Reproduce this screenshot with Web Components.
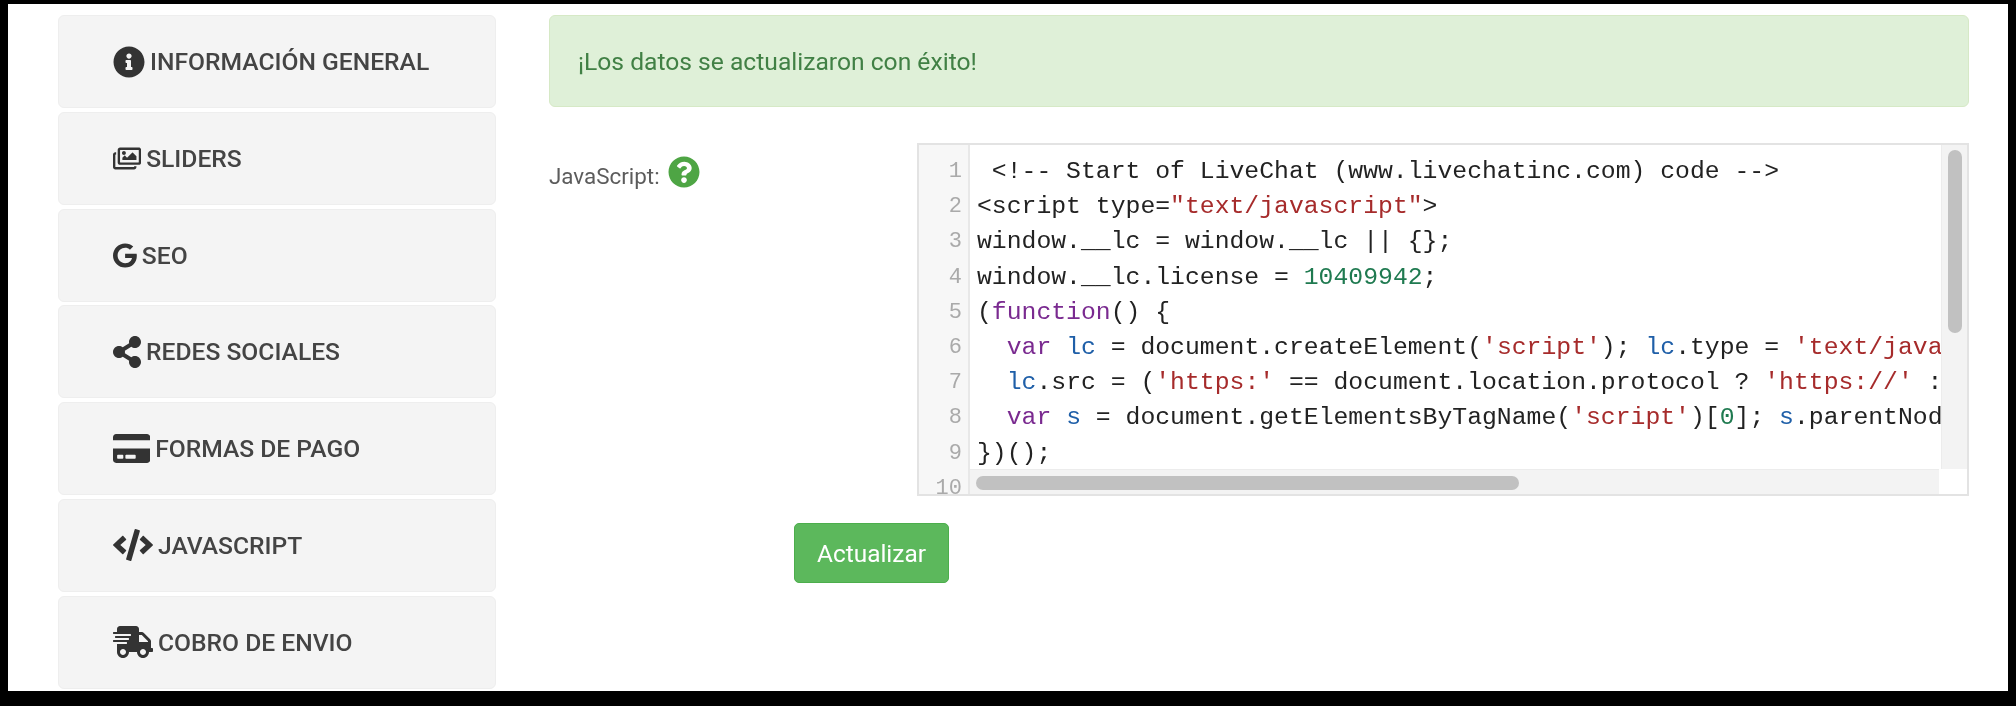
<!doctype html>
<html lang="es">
<head>
<meta charset="utf-8">
<title>JavaScript</title>
<style>
  html, body { margin: 0; height: 100%; background: #000; }
  body { font-family: Roboto, "Liberation Sans", sans-serif; overflow: hidden; }
</style>
</head>
<body>
<settings-page>
  <side-menu slot="menu">
    <menu-item icon="info">INFORMACIÓN GENERAL</menu-item>
    <menu-item icon="images">SLIDERS</menu-item>
    <menu-item icon="google">SEO</menu-item>
    <menu-item icon="share">REDES SOCIALES</menu-item>
    <menu-item icon="card">FORMAS DE PAGO</menu-item>
    <menu-item icon="code">JAVASCRIPT</menu-item>
    <menu-item icon="truck">COBRO DE ENVIO</menu-item>
  </side-menu>
  <success-alert>¡Los datos se actualizaron con éxito!</success-alert>
  <code-field label="JavaScript:"></code-field>
  <submit-button>Actualizar</submit-button>
</settings-page>

<script>
// Icon shapes, [viewBox width, font size, path]
const ICONS = {
  info: [512, 32, 'M256 8C119.043 8 8 119.083 8 256c0 136.997 111.043 248 248 248s248-111.003 248-248C504 119.083 392.957 8 256 8zm0 110c23.196 0 42 18.804 42 42s-18.804 42-42 42-42-18.804-42-42 18.804-42 42-42zm56 254c0 6.627-5.373 12-12 12h-88c-6.627 0-12-5.373-12-12v-24c0-6.627 5.373-12 12-12h12v-64h-12c-6.627 0-12-5.373-12-12v-24c0-6.627 5.373-12 12-12h64c6.627 0 12 5.373 12 12v100h12c6.627 0 12 5.373 12 12v24z'],
  images: [576, 25, 'M480 416v16c0 26.51-21.49 48-48 48H48c-26.51 0-48-21.49-48-48V176c0-26.51 21.49-48 48-48h16v48H54a6 6 0 0 0-6 6v244a6 6 0 0 0 6 6h372a6 6 0 0 0 6-6v-10h48zm42-336H150a6 6 0 0 0-6 6v244a6 6 0 0 0 6 6h372a6 6 0 0 0 6-6V86a6 6 0 0 0-6-6zm6-48c26.51 0 48 21.49 48 48v256c0 26.51-21.49 48-48 48H144c-26.51 0-48-21.49-48-48V80c0-26.51 21.49-48 48-48h384zM264 144c0 22.091-17.909 40-40 40s-40-17.909-40-40 17.909-40 40-40 40 17.909 40 40zm-72 96l39.515-39.515c4.686-4.686 12.284-4.686 16.971 0L288 240l103.515-103.515c4.686-4.686 12.284-4.686 16.971 0L480 208v80H192v-48z'],
  google: [488, 25, 'M488 261.8C488 403.3 391.1 504 248 504 110.8 504 0 393.2 0 256S110.8 8 248 8c66.8 0 123 24.5 166.3 64.9l-67.5 64.9C258.5 52.6 94.3 116.6 94.3 256c0 86.5 69.1 156.6 153.7 156.6 98.2 0 135-70.4 140.8-106.9H248v-85.3h236.1c2.3 12.7 3.9 24.9 3.9 41.4z'],
  share: [448, 32, 'M352 320c-22.608 0-43.387 7.819-59.79 20.895l-102.486-64.054a96.551 96.551 0 0 0 0-41.683l102.486-64.054C308.613 184.181 329.392 192 352 192c53.019 0 96-42.981 96-96S405.019 0 352 0s-96 42.981-96 96c0 7.158.79 14.13 2.276 20.841L155.79 180.895C139.387 167.819 118.608 160 96 160c-53.019 0-96 42.981-96 96s42.981 96 96 96c22.608 0 43.387-7.819 59.79-20.895l102.486 64.054A96.301 96.301 0 0 0 256 416c0 53.019 42.981 96 96 96s96-42.981 96-96-42.981-96-96-96z'],
  card: [576, 33, 'M0 432c0 26.5 21.5 48 48 48h480c26.5 0 48-21.5 48-48V256H0v176zm192-68c0-6.6 5.4-12 12-12h136c6.6 0 12 5.4 12 12v40c0 6.6-5.4 12-12 12H204c-6.6 0-12-5.4-12-12v-40zm-128 0c0-6.6 5.4-12 12-12h72c6.6 0 12 5.4 12 12v40c0 6.6-5.4 12-12 12H76c-6.6 0-12-5.4-12-12v-40zM576 80v48H0V80c0-26.5 21.5-48 48-48h480c26.5 0 48 21.5 48 48z'],
  code: [640, 32, 'M278.9 511.5l-61-17.7c-6.4-1.8-10-8.5-8.2-14.9L346.2 8.7c1.8-6.4 8.5-10 14.9-8.2l61 17.7c6.4 1.8 10 8.5 8.2 14.9L293.8 503.3c-1.9 6.4-8.5 10.1-14.9 8.2zm-114-112.2l43.5-46.4c4.6-4.9 4.3-12.7-.8-17.2L117 256l90.6-79.7c5.1-4.5 5.5-12.3.8-17.2l-43.5-46.4c-4.5-4.8-12.1-5.1-17-.5L3.8 247.2c-5.1 4.7-5.1 12.8 0 17.5l144.1 135.1c4.9 4.6 12.5 4.4 17-.5zm327.2.6l144.1-135.1c5.1-4.7 5.1-12.8 0-17.5L492.1 112.1c-4.8-4.5-12.4-4.3-17 .5L431.6 159c-4.6 4.9-4.3 12.7.8 17.2L523 256l-90.6 79.7c-5.1 4.5-5.5 12.3-.8 17.2l43.5 46.4c4.5 4.9 12.1 5.1 17 .6z'],
  truck: [640, 32, 'M624 352h-16V243.9c0-12.7-5.1-24.9-14.1-33.9L494 110.1c-9-9-21.2-14.1-33.9-14.1H416V48c0-26.5-21.5-48-48-48H112C85.5 0 64 21.5 64 48v48H8c-4.4 0-8 3.6-8 8v16c0 4.4 3.6 8 8 8h272c4.4 0 8 3.6 8 8v16c0 4.4-3.6 8-8 8H40c-4.4 0-8 3.6-8 8v16c0 4.4 3.6 8 8 8h208c4.4 0 8 3.6 8 8v16c0 4.4-3.6 8-8 8H8c-4.4 0-8 3.6-8 8v16c0 4.4 3.6 8 8 8h208c4.4 0 8 3.6 8 8v16c0 4.4-3.6 8-8 8H64v128c0 53 43 96 96 96s96-43 96-96h128c0 53 43 96 96 96s96-43 96-96h48c8.8 0 16-7.2 16-16v-32c0-8.8-7.2-16-16-16zM160 464c-26.5 0-48-21.5-48-48s21.5-48 48-48 48 21.5 48 48-21.5 48-48 48zm320 0c-26.5 0-48-21.5-48-48s21.5-48 48-48 48 21.5 48 48-21.5 48-48 48zm80-208H416V144h44.1l99.9 99.9V256z'],
};
const HELP_PATH = 'M504 256c0 136.997-111.043 248-248 248S8 392.997 8 256C8 119.083 119.043 8 256 8s248 111.083 248 248zM262.655 90c-54.497 0-89.255 22.957-116.549 63.758-3.536 5.286-2.353 12.415 2.715 16.258l34.699 26.31c5.205 3.947 12.621 3.008 16.665-2.122 17.864-22.658 30.113-35.797 57.303-35.797 20.429 0 45.698 13.148 45.698 32.958 0 14.976-12.363 22.667-32.534 33.976C247.128 238.528 216 254.941 216 296v4c0 6.627 5.373 12 12 12h56c6.627 0 12-5.373 12-12v-1.333c0-28.462 83.186-29.647 83.186-106.667 0-58.002-60.165-102-116.531-102zM256 338c-25.365 0-46 20.635-46 46 0 25.364 20.635 46 46 46s46-20.636 46-46c0-25.365-20.635-46-46-46z';

function define(name, html, setup) {
  customElements.define(name, class extends HTMLElement {
    connectedCallback() {
      if (this.shadowRoot) return;
      this.attachShadow({ mode: 'open' }).innerHTML = html;
      if (setup) setup(this, this.shadowRoot);
    }
  });
}

define('settings-page', `
<style>
  :host { display: flex; margin: 4px 8px 0; height: 687px; background: #fff; overflow: hidden; filter: blur(.45px); }
  .menu { flex: 0 0 438px; margin: 11px 53px 0 50px; }
  .main { flex: 0 0 1420px; min-width: 0; margin-top: 11px; }
</style>
<div class="menu"><slot name="menu"></slot></div>
<div class="main"><slot></slot></div>`);

define('side-menu', `
<style>
  :host { display: flex; flex-direction: column; gap: 3.8px; }
</style>
<slot></slot>`);

define('menu-item', `
<style>
  :host {
    display: flex; align-items: center; gap: 5px; box-sizing: border-box;
    height: 93px; padding: 0 0 0 54px;
    background: #f4f4f4; border: 1px solid #eee; border-radius: 6px;
    color: #444; font: 500 24.64px Roboto, sans-serif; white-space: nowrap;
  }
  svg { display: block; fill: #333; flex: none; }
</style>
<svg></svg><span><slot></slot></span>`, (host, root) => {
  const [w, size, d] = ICONS[host.getAttribute('icon')];
  const svg = root.querySelector('svg');
  svg.setAttribute('viewBox', `0 0 ${w} 512`);
  svg.setAttribute('width', size * w / 512);
  svg.setAttribute('height', size);
  svg.innerHTML = `<path d="${d}"/>`;
});

define('success-alert', `
<style>
  :host {
    display: flex; align-items: center; box-sizing: border-box;
    height: 92px; padding: 1px 28px 0;
    background: #dff0d8; border: 1px solid #d6e9c6; border-radius: 6px;
    color: #418045; font: 400 24.64px Roboto, sans-serif;
  }
</style>
<slot></slot>`);

define('code-field', `
<style>
  :host { display: flex; margin-top: 36px; }
  .label {
    flex: 0 0 368px; display: flex; align-items: flex-start; gap: 8px; padding-top: 13px;
    color: #5c5c5c; font: 400 22.4px/31px Roboto, sans-serif;
  }
  .label span { margin-top: 5px; }
  svg { display: block; width: 32px; height: 32px; fill: #4ea544; }
  .editor {
    flex: 1; min-width: 0; position: relative; box-sizing: border-box; height: 353px;
    display: flex; overflow: hidden; border: 2px solid #e3e3e3; background: #fff;
    font: 24.75px/35.2px "Liberation Mono", monospace; color: #222;
  }
  .gutter {
    flex: 0 0 51px; box-sizing: border-box; padding: 9px 6px 0 0; text-align: right;
    background: #f7f7f7; border-right: 2px solid #e8e8e8; color: #aaa; z-index: 1;
    font-size: 22px;
  }
  .code { flex: 1; min-width: 0; overflow: hidden; padding: 9px 0 0 7px; white-space: pre; }
  .s { color: #a62b2b; } .n { color: #1f7a50; } .k { color: #7a2a90; } .d { color: #1f5fa8; }
  .vtrack { position: absolute; right: 0; top: 0; width: 26px; height: 324px; background: #f3f3f3; border-left: 1px solid #ececec; box-sizing: border-box; }
  .vthumb { position: absolute; left: 6px; top: 5px; width: 14px; height: 183px; border-radius: 7px; background: #c1c1c1; }
  .htrack { position: absolute; left: 51px; right: 28px; bottom: 0; height: 25px; background: #f3f3f3; border-top: 1px solid #ececec; box-sizing: border-box; }
  .hthumb { position: absolute; left: 6px; top: 6px; width: 543px; height: 14px; border-radius: 7px; background: #c1c1c1; }
  .corner { position: absolute; right: 0; bottom: 0; width: 28px; height: 25px; background: #fff; }
</style>
<div class="label"><span>JavaScript:</span><svg viewBox="0 0 512 512"><path d="${HELP_PATH}"/></svg></div>
<div class="editor">
  <div class="gutter"><div>1</div><div>2</div><div>3</div><div>4</div><div>5</div><div>6</div><div>7</div><div>8</div><div>9</div><div>10</div></div>
  <div class="code"><div> &lt;!-- Start of LiveChat (www.livechatinc.com) code --&gt;</div><div>&lt;script type=<span class="s">"text/javascript"</span>&gt;</div><div>window.__lc = window.__lc || {};</div><div>window.__lc.license = <span class="n">10409942</span>;</div><div>(<span class="k">function</span>() {</div><div>  <span class="k">var</span> <span class="d">lc</span> = document.createElement(<span class="s">'script'</span>); <span class="d">lc</span>.type = <span class="s">'text/javascript'</span>;</div><div>  <span class="d">lc</span>.src = (<span class="s">'https:'</span> == document.location.protocol ? <span class="s">'https://'</span> : <span class="s">'http://'</span>) + <span class="s">'cdn.livechatinc.com/tracking.js'</span>;</div><div>  <span class="k">var</span> <span class="d">s</span> = document.getElementsByTagName(<span class="s">'script'</span>)[<span class="n">0</span>]; <span class="d">s</span>.parentNode.insertBefore(<span class="d">lc</span>, <span class="d">s</span>);</div><div>})();</div></div>
  <div class="vtrack"><div class="vthumb"></div></div>
  <div class="htrack"><div class="hthumb"></div></div>
  <div class="corner"></div>
</div>`);

define('submit-button', `
<style>
  :host { display: block; margin: 27px 0 0 245px; }
  button {
    display: block; box-sizing: border-box; width: 155px; height: 60px; padding: 0;
    background: #5cb85c; border: 1px solid #4cae4c; border-radius: 5px;
    color: #fff; font: 400 24.4px Roboto, sans-serif;
  }
</style>
<button type="button"><slot></slot></button>`);
</script>
</body>
</html>
